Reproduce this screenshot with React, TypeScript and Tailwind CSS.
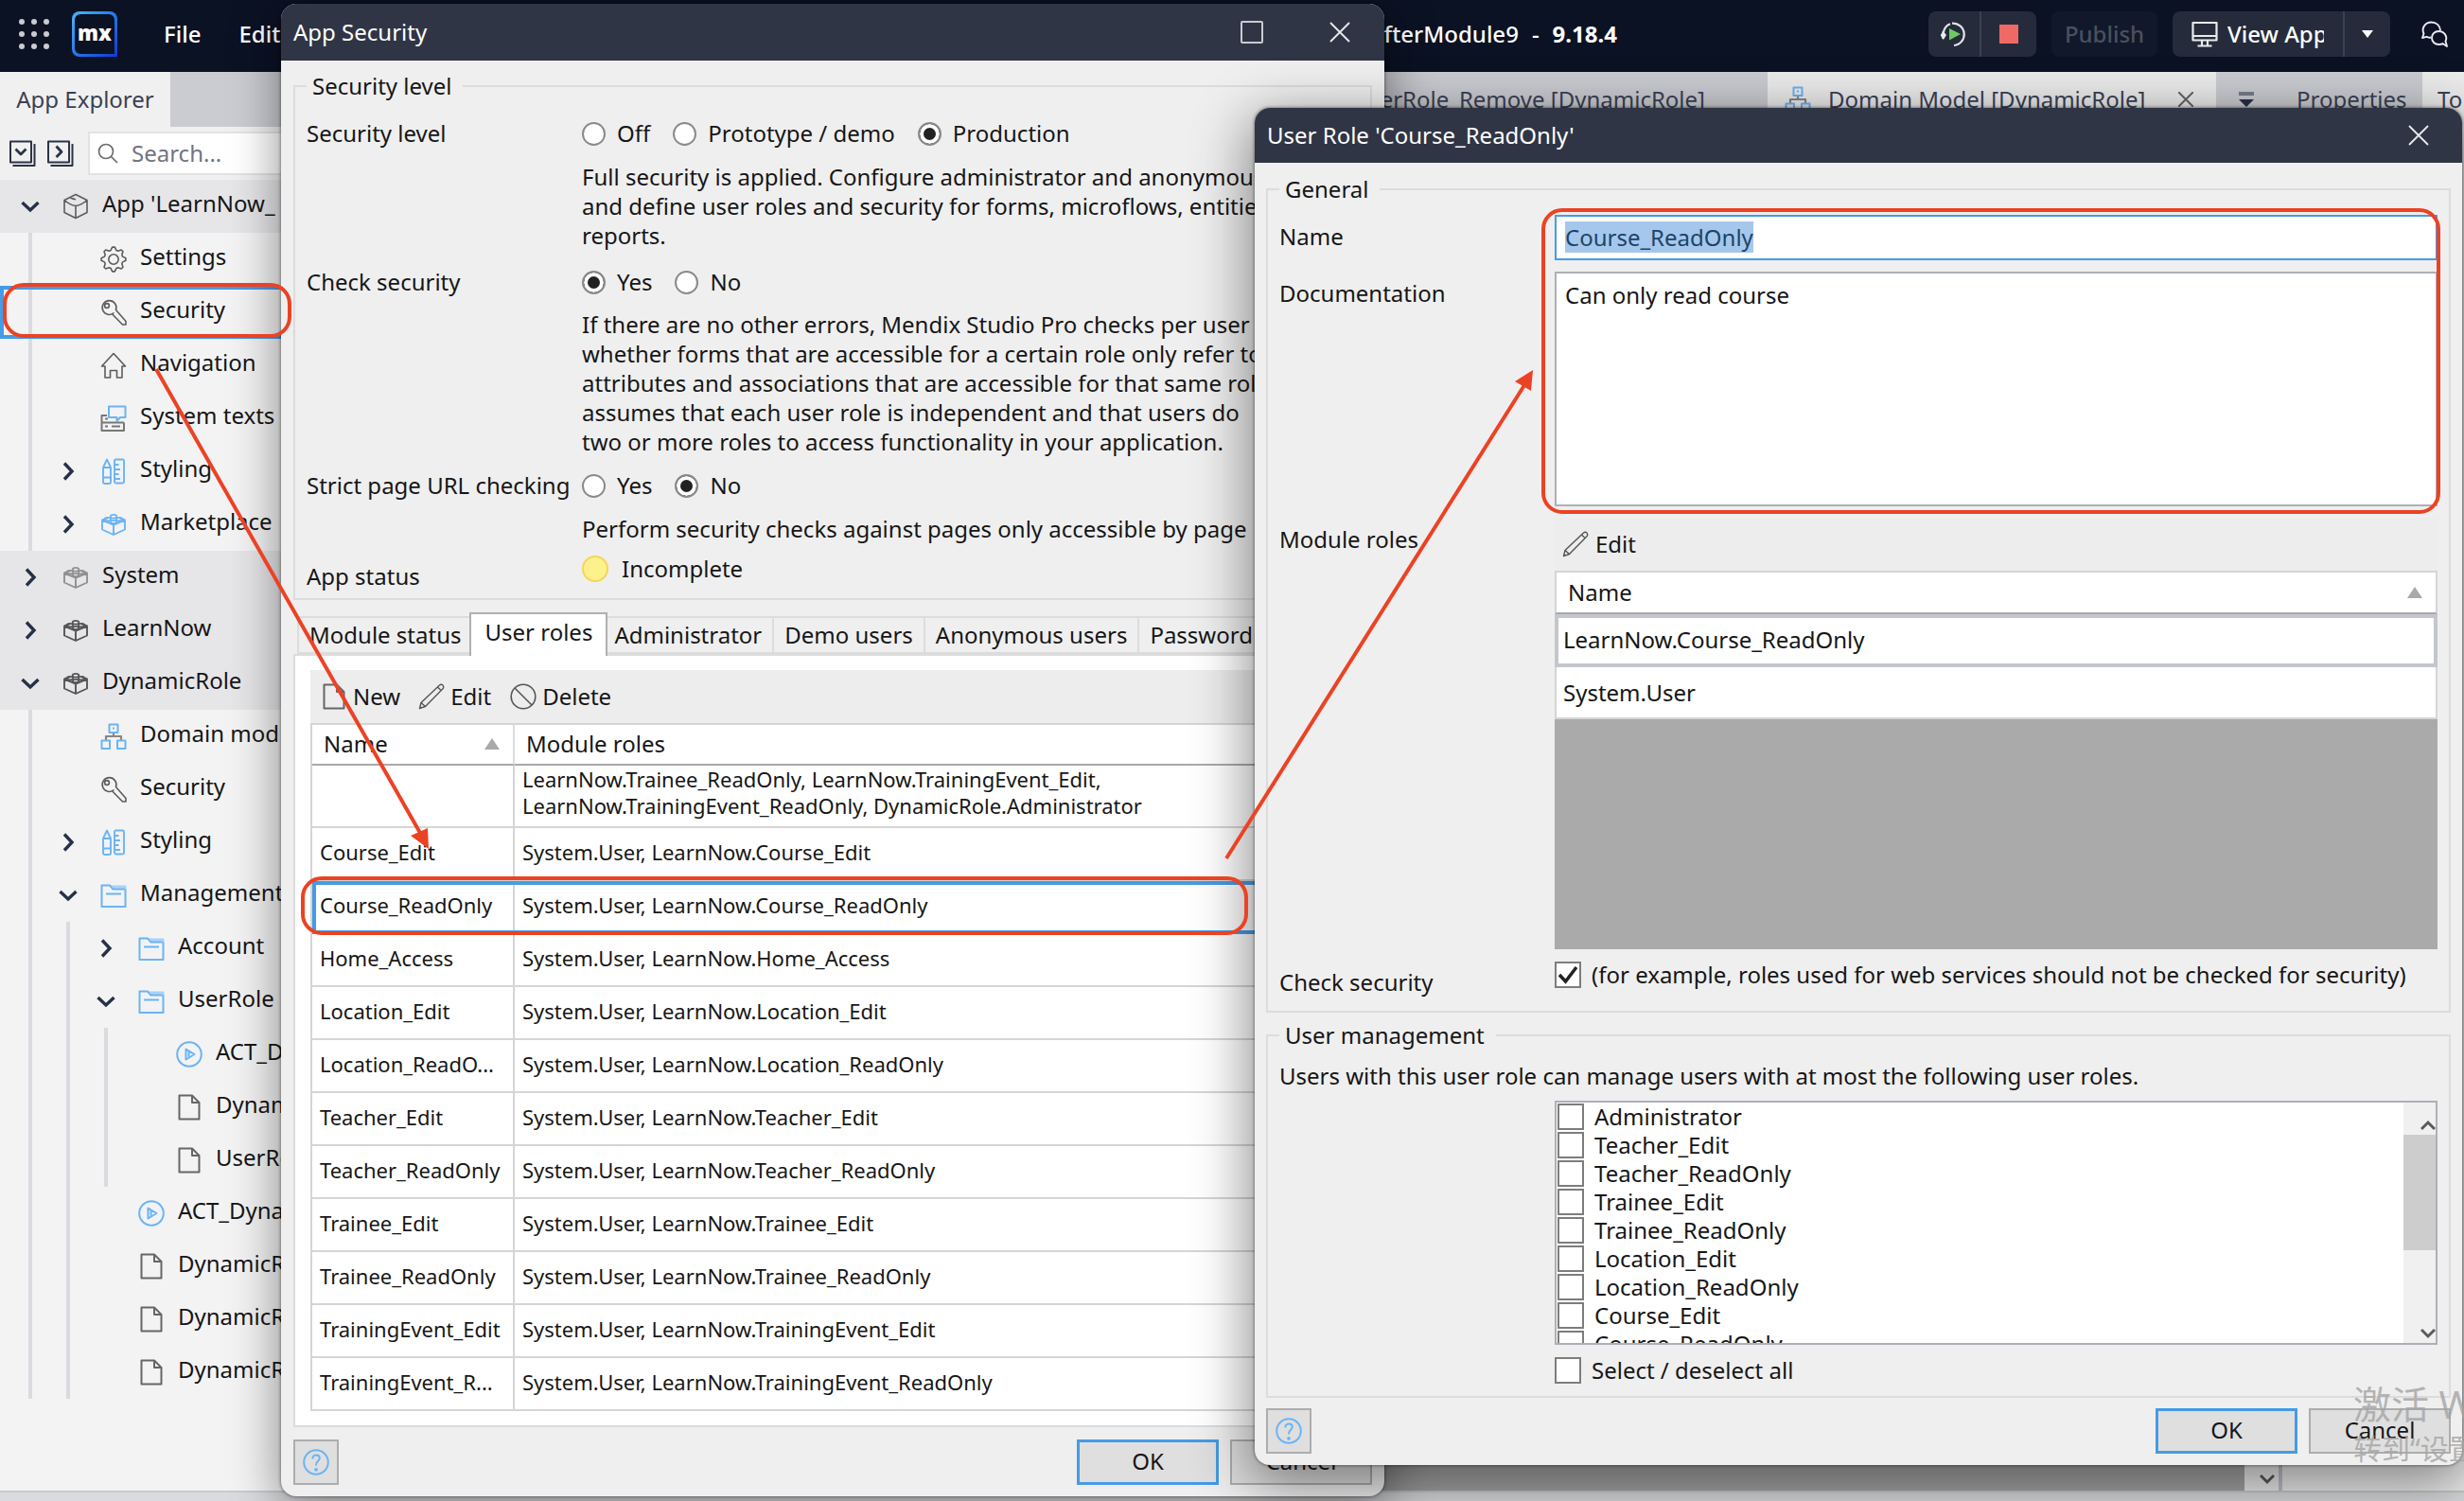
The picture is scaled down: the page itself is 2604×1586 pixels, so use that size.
import React, { useEffect, useRef } from "react";
import type { ReactNode } from "react";

/* ---------- icons ---------- */

type IconProps = { children: ReactNode; className?: string };

function Icon({ children, className = "size-7" }: IconProps) {
  return (
    <svg viewBox="0 0 28 28" fill="none" strokeWidth={1.6} strokeLinejoin="round" className={className + " shrink-0"} aria-hidden="true">
      {children}
    </svg>
  );
}

const GRAY = "#5c5c5c";
const BLUE = "#6bb4f4";

const CubeIcon = () => (
  <Icon>
    <path stroke={GRAY} d="M14 1.5 26 7.5V20.5L14 26.5 2 20.5V7.5Z M2 7.5C6 11 10 13 14 13.5 18 13 22 11 26 7.5 M14 13.5V26.5 M8 4.5C10 6 12 6.5 14 6.8 M14 1.5 8 4.5" />
  </Icon>
);

const gearPoints = Array.from({ length: 32 }, (_, i) => {
  const tooth = i % 4 < 2;
  const angle = ((i + 0.5) * Math.PI * 2) / 32 - Math.PI / 2 - Math.PI / 16;
  const r = tooth ? 13 : 10;
  return `${(14 + r * Math.cos(angle)).toFixed(1)},${(14 + r * Math.sin(angle)).toFixed(1)}`;
}).join(" ");

const GearIcon = () => (
  <Icon>
    <polygon stroke={GRAY} points={gearPoints} />
    <circle stroke={GRAY} cx="14" cy="14" r="5.2" />
  </Icon>
);

const KeyIcon = () => (
  <Icon>
    <path stroke={GRAY} d="M14.5 14.5A7.4 7.4 0 1 1 16.5 11.5L27 23.5V27H23.5L12.5 15.8" />
    <circle stroke={GRAY} cx="7" cy="7" r="2.4" />
  </Icon>
);

const HomeIcon = () => (
  <Icon>
    <path stroke={GRAY} d="M1.5 15 14 1.5 26.5 15H23V27H17.5V19.5H10.5V27H5V15Z" />
  </Icon>
);

const SystemTextsIcon = () => (
  <Icon>
    <path stroke="#777" d="M7 11H1.5V27H25V18.5 M1.5 18.5H25 M5 14.5H8 M5 22.5H8 M12 22.5H21" strokeWidth={2} />
    <path stroke={BLUE} d="M9 1.5H26.5V13H21L17.5 17V13H9Z" strokeWidth={2} fill="#f3f3f4" />
  </Icon>
);

const StylingIcon = () => (
  <Icon>
    <path stroke={BLUE} strokeWidth={1.9} d="M3 10 7 1.5 11 10V25.5C11 26.5 10 27 9 27H5C4 27 3 26.5 3 25.5Z M3 10H11 M3 20.5H11" />
    <path stroke={BLUE} strokeWidth={1.9} d="M16.5 1.5H23.5C24.5 1.5 25 2 25 3V25C25 26 24.5 26.5 23.5 26.5H16.5C15.5 26.5 15 26 15 25V3C15 2 15.5 1.5 16.5 1.5Z M15 7H19.5 M15 12H21 M15 17H19.5 M15 22H21" />
  </Icon>
);

const BrickIcon = ({ color }: { color: string }) => (
  <Icon>
    <path stroke={color} strokeWidth={1.9} d="M2 9.5 8 7 M20 7 26 9.5V19.5L14 25 2 19.5V9.5L14 14.5 26 9.5 M14 14.5V25" />
    <ellipse stroke={color} strokeWidth={1.7} cx="14" cy="5.8" rx="3.4" ry="1.9" />
    <ellipse stroke={color} strokeWidth={1.7} cx="8" cy="8.6" rx="3.2" ry="1.8" />
    <ellipse stroke={color} strokeWidth={1.7} cx="20" cy="8.6" rx="3.2" ry="1.8" />
    <ellipse stroke={color} strokeWidth={1.7} cx="14" cy="11.4" rx="3.2" ry="1.6" />
  </Icon>
);

const DomainIcon = () => (
  <Icon>
    <path stroke="#8b8580" strokeWidth={2.2} d="M14 10V14 M6 18.5V14H22V18.5" />
    <path stroke={BLUE} strokeWidth={2} d="M9.5 1.5H18.5V10H9.5Z M1.5 18.5H10V27H1.5Z M18 18.5H26.5V27H18Z M14 4.5V6.5" />
  </Icon>
);

const FolderIcon = () => (
  <Icon>
    <path fill="#b5d7f5" d="M10 3 14 7H26V5H14Z" />
    <path stroke={BLUE} strokeWidth={2} d="M1.5 3.5H10L13.5 7.5H26.5V26H1.5Z M6 12.5H22" />
    <path stroke="#a8d1f5" strokeWidth={2} d="M12 4.5H26.5V7.5" />
  </Icon>
);

const PlayIcon = () => (
  <Icon>
    <circle stroke={BLUE} strokeWidth={2} cx="14" cy="14" r="12.8" />
    <path stroke={BLUE} strokeWidth={2} d="M10.5 8.5 19.5 14 10.5 19.5Z M13.5 11.5 V16.5" />
  </Icon>
);

const PageIcon = () => (
  <Icon>
    <path stroke="#666" strokeWidth={2} d="M3.5 1.5H17L24.5 9V26.5H3.5Z M17 1.5V9H24.5" />
  </Icon>
);

const PencilIcon = () => (
  <Icon>
    <path stroke="#555" strokeWidth={1.4} d="M1.5 26.5 3 20.5 22.5 2C24 .8 25.5 1.2 26.3 2.5 27 3.8 26.8 5 25.5 6.2L7.5 24.5Z M3 20.5 7.5 24.5 M20.5 4 24 7.5" />
  </Icon>
);

const ForbidIcon = () => (
  <Icon>
    <circle stroke="#555" cx="14" cy="14" r="12.8" />
    <path stroke="#555" d="M5 5 23 23" />
  </Icon>
);

const HelpIcon = () => (
  <Icon>
    <circle stroke={BLUE} strokeWidth={2} cx="14" cy="14" r="12.8" />
    <path stroke={BLUE} strokeWidth={2} d="M10.5 10.5V9.5C10.5 5.5 17.8 5.5 17.8 9.8 17.8 12.8 14 12.8 14 16.8V17.5" />
    <circle fill={BLUE} cx="14" cy="21.8" r="1.9" />
  </Icon>
);

const CollapseIcon = ({ d }: { d: string }) => (
  <Icon>
    <path stroke="#2b3346" strokeWidth={2} d="M1 1.5H23V23.5H1Z M26.5 4V27H3.5" />
    <path stroke="#2b3346" strokeWidth={2.8} d={d} />
  </Icon>
);

const CloseIcon = () => (
  <svg viewBox="0 0 22 22" className="size-[22px]" fill="none" stroke="#e9eaee" strokeWidth={1.8} aria-hidden="true">
    <path d="M1 1 21 21 M21 1 1 21" />
  </svg>
);

const Chevron = ({ open }: { open?: boolean }) => (
  <svg viewBox="0 0 20 20" className="size-5" fill="none" stroke="#263047" strokeWidth={3.4} aria-hidden="true">
    <path d={open ? "M1.5 6 10 14 18.5 6" : "M6 1.5 14 10 6 18.5"} />
  </svg>
);

const SortMark = () => (
  <svg viewBox="0 0 16 12" className="h-3 w-4" aria-hidden="true">
    <path fill="#a9a9a9" d="M8 0 16 12H0Z" />
  </svg>
);

const Caret = ({ up }: { up?: boolean }) => (
  <svg viewBox="0 0 16 12" className="h-3 w-4 shrink-0" fill="none" stroke="#5a5a5a" strokeWidth={3} aria-hidden="true">
    <path d={up ? "M1 10 8 3 15 10" : "M1 2 8 9 15 2"} />
  </svg>
);

/* ---------- form pieces ---------- */

function Radio({ name, label, checked }: { name: string; label: string; checked?: boolean }) {
  return (
    <label className="flex items-center gap-3">
      <input
        type="radio"
        name={name}
        defaultChecked={checked}
        className="size-[25px] shrink-0 appearance-none rounded-full border-2 border-[#8a8a8a] bg-white checked:bg-[#222] checked:shadow-[inset_0_0_0_4px_white]"
      />
      {label}
    </label>
  );
}

function Check({ label, checked }: { label: string; checked?: boolean }) {
  return (
    <label className="flex h-[30px] items-center gap-[11px] whitespace-nowrap">
      <span className="relative size-7 shrink-0">
        <input type="checkbox" defaultChecked={checked} className="peer block size-7 appearance-none border-2 border-[#7d7d7d] bg-white" />
        <svg viewBox="0 0 28 28" className="pointer-events-none absolute inset-0 hidden size-7 peer-checked:block" fill="none" stroke="#222" strokeWidth={3.5} aria-hidden="true">
          <path d="M5 14 11.5 21 23 6" />
        </svg>
      </span>
      {label}
    </label>
  );
}

const PushButton = ({ children, primary }: { children: ReactNode; primary?: boolean }) => (
  <button
    type="button"
    className={
      primary
        ? "h-12 w-[150px] border-[3px] border-[#459be6] bg-[#dfdfdf] pb-[2px]"
        : "h-12 w-[150px] border-2 border-[#adadad] bg-[#dfdfdf] pb-[2px]"
    }
  >
    {children}
  </button>
);

function DialogFooter() {
  return (
    <div className="flex items-center gap-3">
      <button type="button" aria-label="Help" className="mr-auto flex size-12 items-center justify-center border-2 border-[#adadad] bg-[#dfdfdf]">
        <HelpIcon />
      </button>
      <PushButton primary>OK</PushButton>
      <PushButton>Cancel</PushButton>
    </div>
  );
}

function Group({ title, className, children }: { title: string; className?: string; children: ReactNode }) {
  return (
    <fieldset className={"border-2 border-[#dcdcdc] px-3 " + (className ?? "")}>
      <legend className="pr-3 pl-[6px] leading-[30px]">{title}</legend>
      {children}
    </fieldset>
  );
}

/* ---------- main window ---------- */

function TitleBar() {
  return (
    <header className="flex h-[76px] shrink-0 items-center bg-[#0b1224] pb-1 text-white">
      <button type="button" aria-label="Apps" className="ml-5 grid grid-cols-3 gap-[7px]">
        {Array.from({ length: 9 }, (_, i) => (
          <span key={i} className="size-[6px] rounded-full bg-[#c9cbd0]" />
        ))}
      </button>
      <span className="ml-6 flex size-12 items-center justify-center rounded-lg rounded-br-none bg-gradient-to-br from-[#4fb3f6] to-[#1733d8] p-[3px]">
        <span className="flex size-full items-center justify-center rounded-md rounded-br-none bg-[#0b1224] pb-1 font-['Open_Sans'] text-[22px] leading-none font-extrabold">mx</span>
      </span>
      <nav className="ml-[49px] flex gap-10 font-medium">
        <button type="button">File</button>
        <button type="button">Edit</button>
      </nav>
      <p className="mr-[329px] flex flex-1 justify-end gap-[14px] font-medium">
        <span>AfterModule9</span>
        <span>-</span>
        <span className="font-bold">9.18.4</span>
      </p>
      <div className="flex h-12 divide-x-2 divide-[#3b4150] rounded-lg bg-[#252b3a]">
        <button type="button" aria-label="Rerun locally" className="flex w-14 items-center justify-center">
          <Icon>
            <path stroke="#dfe2e8" strokeWidth={2.2} d="M3 12A11.5 11.5 0 0 1 10 3.2 M12 2.6A11.5 11.5 0 0 1 14 26 M2.5 11V19" />
            <path fill="#e8eaee" d="M-.5 15 2.8 11 6 15 2.8 20Z" />
            <path fill="#6ccb5f" d="M9 8 21 14 9 20.5Z" />
          </Icon>
        </button>
        <button type="button" aria-label="Stop" className="flex w-[58px] items-center justify-center">
          <span className="size-5 bg-[#ef6a64]" />
        </button>
      </div>
      <button type="button" disabled className="ml-4 h-12 w-28 rounded-lg bg-[#11182b] font-medium text-[#4b505d]">
        Publish
      </button>
      <div className="ml-4 flex h-12 divide-x-2 divide-[#3b4150] rounded-lg bg-[#252b3a]">
        <button type="button" className="flex w-[182px] items-center gap-[10px] pl-5">
          <Icon>
            <path stroke="#e8eaee" strokeWidth={2.2} d="M1.5 2H26.5V20.5H1.5Z M1.5 16H26.5 M11 20.5V26 M17 20.5V26 M6.5 26.5H21.5" />
          </Icon>
          <span className="w-[102px] overflow-hidden font-medium whitespace-nowrap">View App</span>
        </button>
        <button type="button" aria-label="More view options" className="flex w-[48px] items-center justify-center">
          <svg viewBox="0 0 12 8" className="h-2 w-3" aria-hidden="true">
            <path fill="#fff" d="M0 0H12L6 8Z" />
          </svg>
        </button>
      </div>
      <button type="button" aria-label="Feedback" className="mr-[17px] ml-[33px]">
        <Icon>
          <path stroke="#e8eaee" strokeWidth={1.9} d="M10 17.5C8 18 6.5 17.5 5.5 16.8L1 18 2.5 13.5C-.5 7 4.5 1.5 10.5 1.5 16 1.5 19.5 5 20 10" />
          <path stroke="#e8eaee" strokeWidth={1.9} d="M18.5 11C13.5 11 11 14.5 11 18 11 22 14 25 18.5 25 20 25 21.5 24.8 22.5 24L27 27 25.5 21.5C28 16.5 24 11 18.5 11Z" />
        </Icon>
      </button>
    </header>
  );
}

function TabStrip() {
  return (
    <div className="flex h-[58px] shrink-0 items-stretch bg-[#cbccd1] text-[#3a4154]">
      <button type="button" className="w-[180px] bg-[#f0f0f0]">App Explorer</button>
      <button type="button" className="flex-1 pr-[66px] text-right">ACT_UserRole_Remove [DynamicRole]</button>
      <button type="button" className="flex w-[474px] items-center gap-[18px] bg-[#ececed] pl-[18px]">
        <DomainIcon />
        Domain Model [DynamicRole]
        <svg viewBox="0 0 16 16" className="mr-6 ml-auto size-4" fill="none" stroke="#666" strokeWidth={2} aria-hidden="true">
          <path d="M0 0 16 16 M16 0 0 16" />
        </svg>
      </button>
      <button type="button" className="flex w-[218px] items-center gap-[45px] pl-6">
        <svg viewBox="0 0 16 16" className="size-4" aria-hidden="true">
          <path fill="#777c88" d="M0 0H16V4H0Z" />
          <path fill="#263047" d="M0 8H16L8 16Z" />
        </svg>
        Properties
      </button>
      <button type="button" className="w-[44px] overflow-hidden bg-[#ececed] pl-4 text-left">To</button>
    </div>
  );
}

type Node = { depth: number; state?: "open" | "closed"; icon: ReactNode; label: string; head?: boolean; selected?: boolean };

const tree: Node[] = [
  { depth: 0, state: "open", icon: <CubeIcon />, label: "App 'LearnNow_", head: true },
  { depth: 1, icon: <GearIcon />, label: "Settings" },
  { depth: 1, icon: <KeyIcon />, label: "Security", selected: true },
  { depth: 1, icon: <HomeIcon />, label: "Navigation" },
  { depth: 1, icon: <SystemTextsIcon />, label: "System texts" },
  { depth: 1, state: "closed", icon: <StylingIcon />, label: "Styling" },
  { depth: 1, state: "closed", icon: <BrickIcon color={BLUE} />, label: "Marketplace" },
  { depth: 0, state: "closed", icon: <BrickIcon color="#909090" />, label: "System", head: true },
  { depth: 0, state: "closed", icon: <BrickIcon color="#555" />, label: "LearnNow", head: true },
  { depth: 0, state: "open", icon: <BrickIcon color="#555" />, label: "DynamicRole", head: true },
  { depth: 1, icon: <DomainIcon />, label: "Domain mod" },
  { depth: 1, icon: <KeyIcon />, label: "Security" },
  { depth: 1, state: "closed", icon: <StylingIcon />, label: "Styling" },
  { depth: 1, state: "open", icon: <FolderIcon />, label: "Management" },
  { depth: 2, state: "closed", icon: <FolderIcon />, label: "Account" },
  { depth: 2, state: "open", icon: <FolderIcon />, label: "UserRole" },
  { depth: 3, icon: <PlayIcon />, label: "ACT_D" },
  { depth: 3, icon: <PageIcon />, label: "Dynam" },
  { depth: 3, icon: <PageIcon />, label: "UserRo" },
  { depth: 2, icon: <PlayIcon />, label: "ACT_Dyna" },
  { depth: 2, icon: <PageIcon />, label: "DynamicR" },
  { depth: 2, icon: <PageIcon />, label: "DynamicR" },
  { depth: 2, icon: <PageIcon />, label: "DynamicR" },
];

function TreeRow({ node }: { node: Node }) {
  const bg = node.head ? "bg-[#e6e6e9]" : node.selected ? "outline-4 -outline-offset-4 outline-[#459be6]" : "";
  return (
    <li className={"flex h-14 items-center pl-3 " + bg}>
      {Array.from({ length: node.depth }, (_, i) => (
        <span key={i} className="flex h-14 w-10 shrink-0 justify-center">
          <span className="w-1 bg-[#dadbdf]" />
        </span>
      ))}
      <span className="flex w-10 shrink-0 justify-center">{node.state && <Chevron open={node.state === "open"} />}</span>
      <span className="ml-[14px] flex items-center gap-[14px] whitespace-nowrap">
        {node.icon}
        <span className="pb-[6px]">{node.label}</span>
      </span>
    </li>
  );
}

function Explorer() {
  return (
    <aside className="flex w-[420px] shrink-0 flex-col bg-[#f3f3f4]">
      <div className="flex h-14 items-center bg-[#f0f0f0] pl-[10px]">
        <button type="button" aria-label="Expand all"><CollapseIcon d="M6.5 9.5 12 15 17.5 9.5" /></button>
        <button type="button" aria-label="Collapse all" className="ml-3"><CollapseIcon d="M9.5 6.5 15 12.5 9.5 18" /></button>
        <span className="ml-[9px] h-8 w-[2px] bg-[#d3d3d3]" />
        <label className="ml-[6px] flex h-[46px] flex-1 items-center gap-[14px] border-2 border-[#e3e3e3] bg-white pl-2">
          <svg viewBox="0 0 22 22" className="size-[22px] shrink-0" fill="none" stroke="#6d6d6d" strokeWidth={1.7} aria-hidden="true">
            <circle cx="9" cy="9" r="7.5" />
            <path d="M14.5 14.5 21 21" />
          </svg>
          <input type="search" aria-label="Search" placeholder="Search..." className="min-w-0 flex-1 outline-none placeholder:text-[#6f7482]" />
        </label>
      </div>
      <ul>
        {tree.map((node, i) => (
          <TreeRow key={i} node={node} />
        ))}
      </ul>
    </aside>
  );
}

function MainWindow() {
  return (
    <div className="flex min-h-screen flex-col">
      <TitleBar />
      <TabStrip />
      <div className="flex flex-1">
        <Explorer />
        <main className="flex-1 bg-[#a6a6a6]" />
        <div className="flex w-9 flex-col items-center justify-end bg-[#f0f0f0] pb-[6px] pl-3">
          <Caret />
        </div>
        <section className="w-[196px] border-l-4 border-[#c2c3cb] bg-[#f0f0f0]" />
      </div>
      <footer className="h-[11px] border-t-2 border-[#c9cacd] bg-[#dadbde]" />
    </div>
  );
}

/* ---------- App Security dialog ---------- */

const SYS = "System.User, LearnNow.";
const roles: [string, string][] = [
  ["Course_Edit", SYS + "Course_Edit"],
  ["Course_ReadOnly", SYS + "Course_ReadOnly"],
  ["Home_Access", SYS + "Home_Access"],
  ["Location_Edit", SYS + "Location_Edit"],
  ["Location_ReadO...", SYS + "Location_ReadOnly"],
  ["Teacher_Edit", SYS + "Teacher_Edit"],
  ["Teacher_ReadOnly", SYS + "Teacher_ReadOnly"],
  ["Trainee_Edit", SYS + "Trainee_Edit"],
  ["Trainee_ReadOnly", SYS + "Trainee_ReadOnly"],
  ["TrainingEvent_Edit", SYS + "TrainingEvent_Edit"],
  ["TrainingEvent_R...", SYS + "TrainingEvent_ReadOnly"],
];

function Setting({ label, children, className }: { label: string; children: ReactNode; className: string }) {
  return (
    <div className={"grid grid-cols-[291px_1fr] " + className}>
      <span className="leading-8 whitespace-nowrap">{label}</span>
      <div className="whitespace-nowrap">{children}</div>
    </div>
  );
}

const tab = "h-10 border-y-2 border-r-2 border-[#dcdcdc] px-[11px] whitespace-nowrap";

function AppSecurityDialog() {
  return (
    <section className="absolute top-1 left-[297px] flex w-[1166px] flex-col overflow-hidden rounded-2xl bg-[#efefef] shadow-[0_10px_50px_4px_rgba(0,0,0,0.4),0_0_3px_1px_rgba(0,0,0,0.35)]">
      <header className="flex h-[60px] items-center bg-[#303545] pr-9 pl-[13px] text-white">
        <h2 className="flex-1">App Security</h2>
        <button type="button" aria-label="Maximize" className="size-6 rounded-xs border-2 border-[#c9cbd1]" />
        <button type="button" aria-label="Close" className="ml-[70px]"><CloseIcon /></button>
      </header>
      <div className="px-[13px] pt-3 pb-3">
        <Group title="Security level" className="pb-[7px]">
          <Setting label="Security level" className="mt-[19px]">
            <div className="flex h-8 items-center gap-6">
              <Radio name="level" label="Off" />
              <Radio name="level" label="Prototype / demo" />
              <Radio name="level" label="Production" checked />
            </div>
            <p className="mt-[14px] leading-[31px]">
              Full security is applied. Configure administrator and anonymous
              <br />
              and define user roles and security for forms, microflows, entities
              <br />
              reports.
            </p>
          </Setting>
          <Setting label="Check security" className="mt-[18px]">
            <div className="flex h-8 items-center gap-6">
              <Radio name="check" label="Yes" checked />
              <Radio name="check" label="No" />
            </div>
            <p className="mt-[13px] leading-[31px]">
              If there are no other errors, Mendix Studio Pro checks per user
              <br />
              whether forms that are accessible for a certain role only refer to
              <br />
              attributes and associations that are accessible for that same role
              <br />
              assumes that each user role is independent and that users do
              <br />
              two or more roles to access functionality in your application.
            </p>
          </Setting>
          <Setting label="Strict page URL checking" className="mt-[15px]">
            <div className="flex h-8 items-center gap-6">
              <Radio name="strict" label="Yes" />
              <Radio name="strict" label="No" checked />
            </div>
            <p className="mt-[14px] leading-[31px]">Perform security checks against pages only accessible by page</p>
          </Setting>
          <div className="mt-[11px] grid grid-cols-[291px_1fr]">
            <span className="pt-2 leading-8">App status</span>
            <span className="flex h-8 items-center gap-[14px]">
              <span className="size-7 rounded-full border-2 border-[#f5d657] bg-[#fdf18c]" />
              Incomplete
            </span>
          </div>
        </Group>

        <div className="mt-[13px] flex h-11 items-end pl-1" role="tablist">
          <button type="button" role="tab" className={tab + " border-l-2"}>Module status</button>
          <button type="button" role="tab" aria-selected="true" className="relative -mx-1 -mb-[2px] h-[46px] border-2 border-b-0 border-[#b0b0b0] bg-white px-[14px] pb-[6px] whitespace-nowrap">User roles</button>
          <button type="button" role="tab" className={tab}>Administrator</button>
          <button type="button" role="tab" className={tab}>Demo users</button>
          <button type="button" role="tab" className={tab}>Anonymous users</button>
          <button type="button" role="tab" className={tab}>Password policy</button>
        </div>
        <div className="border-2 border-[#dcdcdc] bg-white px-4 pt-[15px] pb-[15px]">
          <div className="flex h-14 items-center bg-[#ededed] pl-[11px]">
            <button type="button" className="flex items-center gap-[6px]"><PageIcon />New</button>
            <button type="button" className="ml-[19px] flex items-center gap-[6px]"><PencilIcon />Edit</button>
            <button type="button" className="ml-5 flex items-center gap-[6px]"><ForbidIcon />Delete</button>
          </div>
          <table className="w-full table-fixed border-separate border-spacing-0 border-t-2 border-l-2 border-[#d5d5d5] text-left">
            <thead>
              <tr className="h-[43px]">
                <th className="w-[214px] border-r-2 border-b-2 border-r-[#dcdcdc] border-b-[#aaa] pr-[14px] pb-[2px] pl-3 font-normal">
                  <span className="flex items-center justify-between">Name<SortMark /></span>
                </th>
                <th className="border-r-2 border-b-2 border-r-[#dcdcdc] border-b-[#aaa] pb-[2px] pl-3 font-normal">Module roles</th>
              </tr>
            </thead>
            <tbody className="text-[22px] leading-7">
              <tr className="h-[66px] align-top">
                <td className="border-r-2 border-b-2 border-[#d5d5d5]" />
                <td className="border-r-2 border-b-2 border-[#d5d5d5] pl-2">
                  LearnNow.Trainee_ReadOnly, LearnNow.TrainingEvent_Edit,
                  <br />
                  LearnNow.TrainingEvent_ReadOnly, DynamicRole.Administrator
                </td>
              </tr>
              {roles.map(([name, modules]) => (
                <tr key={name} className={name === "Course_ReadOnly" ? "h-14 outline-4 -outline-offset-4 outline-[#459be6]" : "h-14"}>
                  <td className="border-r-2 border-b-2 border-[#d5d5d5] pb-1 pl-2 whitespace-nowrap">{name}</td>
                  <td className="border-r-2 border-b-2 border-[#d5d5d5] pb-1 pl-2 whitespace-nowrap">{modules}</td>
                </tr>
              ))}
            </tbody>
          </table>
        </div>
        <div className="mt-[13px]"><DialogFooter /></div>
      </div>
    </section>
  );
}

/* ---------- User Role dialog ---------- */

const manageable = ["Administrator", "Teacher_Edit", "Teacher_ReadOnly", "Trainee_Edit", "Trainee_ReadOnly", "Location_Edit", "Location_ReadOnly", "Course_Edit", "Course_ReadOnly"];

function UserRoleDialog() {
  const nameRef = useRef<HTMLInputElement>(null);
  useEffect(() => {
    nameRef.current?.focus();
    nameRef.current?.select();
  }, []);
  return (
    <section className="absolute top-[114px] right-[2px] flex w-[1276px] flex-col overflow-hidden rounded-2xl bg-[#efefef] shadow-[0_16px_60px_6px_rgba(0,0,0,0.45),0_0_3px_1px_rgba(0,0,0,0.35)]">
      <header className="flex h-[58px] items-center bg-[#303545] pr-[35px] pl-[13px] text-white">
        <h2 className="flex-1">User Role 'Course_ReadOnly'</h2>
        <button type="button" aria-label="Close"><CloseIcon /></button>
      </header>
      <div className="px-3 pt-[13px] pb-3">
        <Group title="General" className="pb-[7px]">
          <div className="mt-3 grid grid-cols-[291px_1fr] gap-y-3">
            <label htmlFor="role-name" className="leading-[46px]">Name</label>
            <input
              id="role-name"
              ref={nameRef}
              defaultValue="Course_ReadOnly"
              className="h-12 w-full min-w-0 border-2 border-[#459be6] bg-white px-[9px] pb-[2px] outline-none selection:bg-[#a5c7ec] selection:text-[#1c4468]"
            />
            <label htmlFor="role-doc" className="leading-[46px]">Documentation</label>
            <textarea
              id="role-doc"
              defaultValue="Can only read course"
              className="block h-[248px] w-full resize-none border-2 border-[#adb0b8] bg-white px-[9px] py-2 leading-[30px] outline-none"
            />
            <span className="leading-[46px]">Module roles</span>
            <div>
              <div className="flex h-14 items-center bg-[#ededed] pl-2">
                <button type="button" className="flex items-center gap-[7px]"><PencilIcon />Edit</button>
              </div>
              <div className="h-[400px] bg-[#aaa]">
                <table className="w-full border-separate border-spacing-0 bg-white text-left">
                  <thead>
                    <tr className="h-[46px]">
                      <th className="border-2 border-[#d5d5d5] border-b-[#aaa] pr-[14px] pl-3 font-normal">
                        <span className="flex items-center justify-between">Name<SortMark /></span>
                      </th>
                    </tr>
                  </thead>
                  <tbody>
                    <tr className="h-14">
                      <td className="border-4 border-[#c3c6cc] pb-[2px] pl-[5px]">LearnNow.Course_ReadOnly</td>
                    </tr>
                    <tr className="h-[55px]">
                      <td className="border-x-2 border-b-2 border-[#d5d5d5] pl-[7px]">System.User</td>
                    </tr>
                  </tbody>
                </table>
              </div>
            </div>
            <span className="leading-[46px]">Check security</span>
            <Check label="(for example, roles used for web services should not be checked for security)" checked />
          </div>
        </Group>

        <Group title="User management" className="mt-[9px] pb-3">
          <p className="mt-[13px] leading-[30px]">Users with this user role can manage users with at most the following user roles.</p>
          <div className="ml-[291px]">
            <div className="mt-[11px] flex h-[258px] overflow-hidden border-2 border-[#adb0b8] bg-white">
              <ul className="flex-1 pl-px">
                {manageable.map((role) => (
                  <li key={role}><Check label={role} /></li>
                ))}
              </ul>
              <div className="flex w-[34px] flex-col items-end bg-[#f0f0f0] pb-1">
                <div className="flex h-[34px] items-end pb-1"><Caret up /></div>
                <div className="h-[122px] w-full bg-[#cdcdcd]" />
                <div className="mt-auto"><Caret /></div>
              </div>
            </div>
            <div className="mt-3"><Check label="Select / deselect all" /></div>
          </div>
        </Group>
        <div className="mt-[11px]"><DialogFooter /></div>
      </div>
    </section>
  );
}

/* ---------- markup drawn over the windows ---------- */

function Annotations() {
  return (
    <svg className="pointer-events-none absolute top-0 left-0 h-[1586px] w-[2604px]" viewBox="0 0 2604 1586" fill="none" stroke="#ec4224" strokeWidth={4} aria-hidden="true">
      <rect x="5" y="301" width="301" height="54" rx="20" />
      <rect x="320" y="928" width="997" height="58" rx="20" />
      <rect x="1631" y="222" width="946" height="319" rx="20" />
      <path d="M165 390 444 880" />
      <path d="M453 897 434 883 452 875Z" fill="#ec4224" stroke="none" />
      <path d="M1296 907 1611 407" />
      <path d="M1620 391 1601 403 1618 413Z" fill="#ec4224" stroke="none" />
    </svg>
  );
}

export default function App() {
  return (
    <div className="relative min-h-screen w-full overflow-hidden font-['Noto_Sans','Noto_Sans_CJK_SC',sans-serif] text-[24px] leading-[30px] text-[#161616]">
      <MainWindow />
      <AppSecurityDialog />
      <UserRoleDialog />
      <div className="pointer-events-none absolute right-0 bottom-8 w-[117px] overflow-hidden whitespace-nowrap text-[#a3a3a3]/80">
        <p className="text-[40px] leading-[47px]">激活 W</p>
        <p className="text-[30px] leading-[47px]">转到“设置”</p>
      </div>
      <Annotations />
    </div>
  );
}
